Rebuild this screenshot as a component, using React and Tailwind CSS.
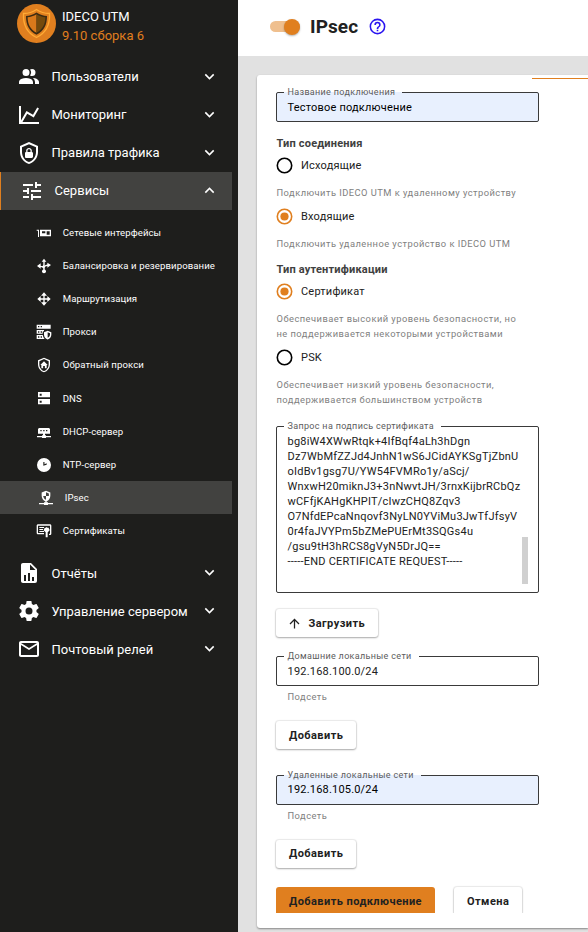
import React from 'react';
import { MdTune } from 'react-icons/md';

const P = {
  users:
    'M16 17V19H2V17S2 13 9 13 16 17 16 17M12.5 7.5A3.5 3.5 0 1 0 9 11A3.5 3.5 0 0 0 12.5 7.5M15.94 13A5.32 5.32 0 0 1 18 17V19H22V17S22 13.37 15.94 13M15 4A3.39 3.39 0 0 0 13.07 4.59A5 5 0 0 1 13.07 10.41A3.39 3.39 0 0 0 15 11A3.5 3.5 0 0 0 15 4Z',
  chart: 'M16,11.78L20.24,4.45L21.97,5.45L16.74,14.5L10.23,10.75L5.46,19H22V21H2V3H4V17.54L9.5,8L16,11.78Z',
  lock: 'M21,11C21,16.55 17.16,21.74 12,23C6.84,21.74 3,16.55 3,11V5L12,1L21,5V11M12,21C15.75,20 19,15.54 19,11.22V6.3L12,3.18L5,6.3V11.22C5,15.54 8.25,20 12,21M14.8,11V9.5C14.8,8.1 13.4,7 12,7C10.6,7 9.2,8.1 9.2,9.5V11C8.6,11 8,11.6 8,12.2V15.7C8,16.4 8.6,17 9.2,17H14.7C15.4,17 16,16.4 16,15.8V12.3C16,11.6 15.4,11 14.8,11M13.5,11H10.5V9.5C10.5,8.7 11.2,8.2 12,8.2C12.8,8.2 13.5,8.7 13.5,9.5V11Z',
  report:
    'M13,9H18.5L13,3.5V9M6,2H14L20,8V20A2,2 0 0,1 18,22H6C4.89,22 4,21.1 4,20V4C4,2.89 4.89,2 6,2M7,20H9V14H7V20M11,20H13V12H11V20M15,20H17V16H15V20Z',
  cog: 'M12,15.5A3.5,3.5 0 0,1 8.5,12A3.5,3.5 0 0,1 12,8.5A3.5,3.5 0 0,1 15.5,12A3.5,3.5 0 0,1 12,15.5M19.43,12.97C19.47,12.65 19.5,12.33 19.5,12C19.5,11.67 19.47,11.34 19.43,11L21.54,9.37C21.73,9.22 21.78,8.95 21.66,8.73L19.66,5.27C19.54,5.05 19.27,4.96 19.05,5.05L16.56,6.05C16.04,5.66 15.5,5.32 14.87,5.07L14.5,2.42C14.46,2.18 14.25,2 14,2H10C9.75,2 9.54,2.18 9.5,2.42L9.13,5.07C8.5,5.32 7.96,5.66 7.44,6.05L4.95,5.05C4.73,4.96 4.46,5.05 4.34,5.27L2.34,8.73C2.21,8.95 2.27,9.22 2.46,9.37L4.57,11C4.53,11.34 4.5,11.67 4.5,12C4.5,12.33 4.53,12.65 4.57,12.97L2.46,14.63C2.27,14.78 2.21,15.05 2.34,15.27L4.34,18.73C4.46,18.95 4.73,19.03 4.95,18.95L7.44,17.94C7.96,18.34 8.5,18.68 9.13,18.93L9.5,21.58C9.54,21.82 9.75,22 10,22H14C14.25,22 14.46,21.82 14.5,21.58L14.87,18.93C15.5,18.67 16.04,18.34 16.56,17.94L19.05,18.95C19.27,19.03 19.54,18.95 19.66,18.73L21.66,15.27C21.78,15.05 21.73,14.78 21.54,14.63L19.43,12.97Z',
  mail: 'M22 6C22 4.9 21.1 4 20 4H4C2.9 4 2 4.9 2 6V18C2 19.1 2.9 20 4 20H20C21.1 20 22 19.1 22 18V6M20 6L12 11L4 6H20M20 18H4V8L12 13L20 8V18Z',
  nic: 'M1 7H4.5V18H3V8.500H1ZM6 7H22.500V17H6ZM9 9.500V12.500H14V9.500ZM16 9.500V14.500H20.500V9.500Z',
  balance:
    'M12 1L8.500 5.500H11V9C11 12 10 12.500 7 11.800V8L1.500 12L7 16V13.500C9.500 14 11 15 11 16.500V17.200A3 3 0 1 0 13 17.200V16C13 13 14.500 12 17 12V14.500L22.500 10.500L17 7V9.800C15 10 13.800 10.600 13 11.500V5.500H15.500Z',
  route: 'M13,11H17V7.500L22,12L17,16.500V13H13V17H16.500L12,22L7.500,17H11V13H7V16.500L2,12L7,7.500V11H11V7H7.500L12,2L16.500,7H13V11Z',
  proxy:
    'M1 1H22V7H1ZM3 3V5H5V3ZM7 3V5H9V3ZM1 9H12V10.500L10 11.500V14.500H1ZM3 11V13H5V11ZM7 11V13H9V11ZM1 16.500H10.200C10.500 18.800 11.500 21 13 22.500H1ZM3 18.500V20.500H5V18.500ZM7 18.500V20.500H9V18.500ZM17.500 10L23 12.300V16C23 19.300 20.700 22.300 17.500 23.200C14.300 22.300 12 19.300 12 16V12.300ZM17.500 12.500V20.700C19.500 19.900 21 18 21 15.900V13.800Z',
  home: 'M21,11C21,16.55 17.16,21.74 12,23C6.84,21.74 3,16.55 3,11V5L12,1L21,5V11M12,21C15.75,20 19,15.54 19,11.22V6.3L12,3.18L5,6.3V11.22C5,15.54 8.25,20 12,21M12 6.500L17.500 12H16V17H13.300V13.500H10.700V17H8V12H6.500Z',
  dns: 'M3 3H21V11H3ZM5.500 5.500V8.500H8.500V5.500ZM3 13.500H21V21.500H3ZM5.500 16V19H8.500V16Z',
  dhcp: 'M4.500 7.500H19.500L21 9V16H13.500V18.500H15V19.500H22.500V21.500H15V22.500H9V21.500H1.500V19.500H9V18.500H10.500V16H3V9ZM6.500 10.500V12.500H8.500V10.500ZM10.800 10.500V12.500H12.800V10.500ZM15 10.500V12.500H17V10.500Z',
  clock: 'M12 1.500A10.500 10.500 0 1 0 12 22.500A10.500 10.500 0 1 0 12 1.500M11 7.500H12.700V10.700L16 9.500V11.500L11 13Z',
  ipsec:
    'M12 1L18.500 3.700V8.500C18.500 12.500 16 15.500 13 16.700V18.500H15V19.500H22.500V21.500H15V22.500H9V21.500H1.500V19.500H9V18.500H11V16.700C8 15.500 5.500 12.500 5.500 8.500V3.700ZM12 3.500V9H7.800C8.200 11.800 9.900 14 12 14.800V9H16.300V5.300Z',
  cert: 'M3 2H21C22 2 23 3 23 4V16C23 17 22 18 21 18H19.500V16H21V4H3V15H12V17H3C2 17 1 16 1 15V4C1 3 2 2 3 2ZM5 6H12V7.500H5ZM5 9H10.500V10.500H5ZM5 12H12V13.500H5ZM16 6L17.200 7.200H19L19.500 9L20.700 10.500L19.500 12L17.500 14V21.500H14.500V14L12.500 12L11.300 10.500L12.500 9L13 7.200H14.800Z',
};

function Icon({ d, className }) {
  return (
    <svg viewBox="0 0 24 24" className={`shrink-0 ${className}`} fill="currentColor" fillRule="evenodd">
      <path d={d} />
    </svg>
  );
}

function Chevron({ up }) {
  return (
    <svg viewBox="0 0 24 24" className="mr-[13px] mb-px size-[19px] shrink-0" fill="currentColor">
      <path
        d={
          up
            ? 'M7.41 15.41L12 10.83L16.59 15.41L18 14L12 8L6 14L7.41 15.41Z'
            : 'M7.41 8.58L12 13.17L16.59 8.58L18 10L12 16L6 10L7.41 8.58Z'
        }
      />
    </svg>
  );
}

function Group({ d, children }) {
  return (
    <div className="flex h-[38px] w-[232px] items-center pl-[17px]">
      <Icon d={d} className="size-6" />
      <span className="ml-[10.500px] flex-1 text-[13px] tracking-[0.01px] whitespace-nowrap">{children}</span>
      <Chevron />
    </div>
  );
}

const SERVICES = [
  ['nic', 'Сетевые интерфейсы'],
  ['balance', 'Балансировка и резервирование'],
  ['route', 'Маршрутизация'],
  ['proxy', 'Прокси'],
  ['home', 'Обратный прокси'],
  ['dns', 'DNS'],
  ['dhcp', 'DHCP-сервер'],
  ['clock', 'NTP-сервер'],
  ['ipsec', 'IPsec'],
  ['cert', 'Сертификаты'],
];

function Sidebar() {
  return (
    <aside className="flex w-[238px] shrink-0 flex-col bg-[#1e1e1c] text-white">
      <div className="flex h-[58px] items-start pt-[4px] pl-[17px]">
        <svg viewBox="0 0 39 39" className="size-[39px] shrink-0">
          <circle cx="19.500" cy="19.500" r="19.500" fill="#e07f1f" />
          <path d="M19.500 5.500C23 8 28 9.500 32.500 9.500C33 20 29 29 19.500 33.500C10 29 6 20 6.500 9.500C11 9.500 16 8 19.500 5.500Z" fill="#e07f1f" stroke="#ffab35" strokeWidth="1.300" />
          <path d="M19.500 8.500C23 10.800 26.500 12 30 12C30 21 27 27 19.500 30.700C12 27 9 21 9 12C12.500 12 16 10.800 19.500 8.500Z" fill="#3c2b12" />
          <path d="M19.500 10.300V28.800C13.500 25.500 10.700 20.500 10.600 13.300C13.500 13.100 16.700 12.100 19.500 10.300Z" fill="#d9791b" />
          <path d="M19.500 10.300V28.800C25.500 25.500 28.300 20.500 28.400 13.300C25.500 13.100 22.300 12.100 19.500 10.300Z" fill="#744a0c" />
        </svg>
        <div className="ml-[6px] flex flex-col pt-[3px] text-[13px] leading-[19px] tracking-[0.01px]">
          <span>IDECO UTM</span>
          <span className="text-[#e07f1f]">9.10 сборка 6</span>
        </div>
      </div>
      <Group d={P.users}>Пользователи</Group>
      <Group d={P.chart}>Мониторинг</Group>
      <Group d={P.lock}>Правила трафика</Group>
      <div className="flex h-[38px] w-[232px] items-center border-l border-[#e07f1f] bg-[#424240] pl-[19px]">
        <MdTune className="size-6 shrink-0" />
        <span className="ml-[10.500px] flex-1 text-[13px] tracking-[0.01px]">Сервисы</span>
        <Chevron up />
      </div>
      <div className="flex flex-col pt-[6px] pb-[7px]">
        {SERVICES.map(([k, label]) => (
          <div
            key={k}
            className={`flex h-[33.15px] w-[232px] items-center text-[9.600px] tracking-[0.09px] whitespace-nowrap ${
              k === 'ipsec' ? 'bg-[#424240] pl-[38px]' : 'pl-[36px]'
            }`}
          >
            <Icon d={P[k]} className="size-4" />
            <span className="ml-[10.700px] pt-px">{label}</span>
          </div>
        ))}
      </div>
      <Group d={P.report}>Отчёты</Group>
      <Group d={P.cog}>Управление сервером</Group>
      <Group d={P.mail}>Почтовый релей</Group>
    </aside>
  );
}

function Radio({ checked, children }) {
  return (
    <div className="flex h-4 items-center">
      <svg viewBox="0 0 17 17" className={`mb-px size-[17px] shrink-0 ${checked ? 'text-[#e07f1f]' : 'text-black'}`}>
        <circle cx="8.500" cy="8.500" r="7.200" fill="none" stroke="currentColor" strokeWidth="1.600" />
        {checked && <circle cx="8.500" cy="8.500" r="4.100" fill="currentColor" />}
      </svg>
      <span className="ml-[8px] text-[11px] leading-4 tracking-[0.2px]">{children}</span>
    </div>
  );
}

function Hint({ children }) {
  return (
    <p className="pl-[0.500px] text-[9.330px] leading-[15px] tracking-[0.460px] whitespace-nowrap text-[#808080]">{children}</p>
  );
}

function Field({ label, className, children }) {
  return (
    <fieldset className={`w-[263px] rounded-[2px] border border-[#3a3a3a] text-[11px] tracking-[0.2px] ${className}`}>
      <legend className="ml-[7px] h-[10px] pr-[7px] pl-[3.500px] text-[9px] leading-[10px] tracking-[0.33px] whitespace-nowrap text-[#5c5c5c]">
        {label}
      </legend>
      {children}
    </fieldset>
  );
}

function Button({ className = '', children }) {
  return (
    <button
      className={`flex h-[28px] w-fit items-center rounded-[3px] bg-white pt-[2px] text-[11px] font-bold tracking-[0.440px] whitespace-nowrap shadow-[0_0_1px_1px_rgba(0,0,0,0.08),0_1px_2px_rgba(0,0,0,0.28)] ${className}`}
    >
      {children}
    </button>
  );
}

const REQUEST = [
  'bg8iW4XWwRtqk+4IfBqf4aLh3hDgn',
  'Dz7WbMfZZJd4JnhN1wS6JCidAYKSgTjZbnU',
  'oIdBv1gsg7U/YW54FVMRo1y/aScj/',
  'WnxwH20miknJ3+3nNwvtJH/3rnxKijbrRCbQz',
  'wCFfjKAHgKHPIT/cIwzCHQ8Zqv3',
  'O7NfdEPcaNnqovf3NyLN0YViMu3JwTfJfsyV',
  '0r4faJVYPm5bZMePUErMt3SQGs4u',
  '/gsu9tH3hRCS8gVyN5DrJQ==',
  '-----END CERTIFICATE REQUEST-----',
];

export default function App() {
  return (
    <div className="flex h-[932px] w-[588px] overflow-hidden bg-[#e1e1e1] font-['Roboto','Noto_Sans',sans-serif] text-[#212121]">
      <Sidebar />
      <main className="flex min-w-0 flex-1 flex-col">
        <header className="flex h-[56px] shrink-0 items-center bg-white pb-[3px] pl-[32px]">
          <div className="flex h-[11px] w-[30px] items-center justify-end rounded-full bg-[#efbf8e]">
            <span className="size-4 rounded-full bg-[#e07f1f] shadow-[0_1px_2px_rgba(0,0,0,0.3)]" />
          </div>
          <h1 className="ml-[10px] text-[19px] leading-6 font-bold tracking-[0.1px]">IPsec</h1>
          <svg viewBox="0 0 24 24" className="ml-[9.500px] size-[19px]" fill="#2a14f0">
            <path d="M11,18H13V16H11V18M12,2A10,10 0 0,0 2,12A10,10 0 0,0 12,22A10,10 0 0,0 22,12A10,10 0 0,0 12,2M12,20C7.59,20 4,16.41 4,12C4,7.59 7.59,4 12,4C16.41,4 20,7.59 20,12C20,16.41 16.41,20 12,20M12,6A4,4 0 0,0 8,10H10A2,2 0 0,1 12,8A2,2 0 0,1 14,10C14,12 11,11.75 11,15H13C13,12.75 16,12.5 16,10A4,4 0 0,0 12,6Z" />
          </svg>
        </header>
        <section className="mt-[19px] ml-[19px] flex h-[853px] flex-col rounded-l-[3px] bg-white pt-[3px] pl-[19px] shadow-[0_1px_2px_rgba(0,0,0,0.4)]">
          <div className="h-px w-[56px] shrink-0 self-end bg-[#e07f1f]" />
          <Field label="Название подключения" className="mt-[8px] h-[35px] bg-[#e8f0fe]">
            <div className="pt-[3px] pl-[10.500px] leading-[15px] text-black">Тестовое подключение</div>
          </Field>
          <h2 className="mt-[14px] pl-[0.500px] text-[11px] leading-[15px] font-bold tracking-[0.2px] text-[#404040]">Тип соединения</h2>
          <div className="mt-[7px]">
            <Radio>Исходящие</Radio>
          </div>
          <div className="mt-[11px]">
            <Hint>Подключить IDECO UTM к удаленному устройству</Hint>
          </div>
          <div className="mt-[9px]">
            <Radio checked>Входящие</Radio>
          </div>
          <div className="mt-[11px]">
            <Hint>Подключить удаленное устройство к IDECO UTM</Hint>
          </div>
          <h2 className="mt-[11px] pl-[0.500px] text-[11px] leading-[15px] font-bold tracking-[0.2px] text-[#404040]">Тип аутентификации</h2>
          <div className="mt-[7px]">
            <Radio checked>Сертификат</Radio>
          </div>
          <div className="mt-[11px]">
            <Hint>
              Обеспечивает высокий уровень безопасности, но
              <br />
              не поддерживается некоторыми устройствами
            </Hint>
          </div>
          <div className="mt-[9px]">
            <Radio>PSK</Radio>
          </div>
          <div className="mt-[11px]">
            <Hint>
              Обеспечивает низкий уровень безопасности,
              <br />
              поддерживается большинством устройств
            </Hint>
          </div>
          <Field label="Запрос на подпись сертификата" className="mt-[14px] h-[172px]">
            <div className="flex justify-between pt-[3px] pr-[10px] pl-[10.500px]">
              <div className="w-[234px] shrink-0 text-[11px] leading-[15px] tracking-[0.220px] whitespace-nowrap">
                {REQUEST.map((line) => (
                  <div key={line}>{line}</div>
                ))}
              </div>
              <div className="mt-[103px] h-[47px] w-[6px] bg-[#d0d0d0]" />
            </div>
          </Field>
          <Button className="mt-[16px] pr-[13px] pl-[11px]">
            <svg viewBox="0 0 24 24" className="mr-[6.500px] mb-px size-[15px]" fill="currentColor">
              <path d="M13,20H11V8L5.500,13.500L4.080,12.080L12,4.160L19.920,12.080L18.500,13.500L13,8V20Z" />
            </svg>
            Загрузить
          </Button>
          <Field label="Домашние локальные сети" className="mt-[14px] h-[35px]">
            <div className="pt-[3px] pl-[10.500px] leading-[15px]">192.168.100.0/24</div>
          </Field>
          <div className="mt-[3px] pl-[11px]">
            <Hint>Подсеть</Hint>
          </div>
          <Button className="mt-[17px] px-[13px]">Добавить</Button>
          <Field label="Удаленные локальные сети" className="mt-[21px] h-[35px] bg-[#e8f0fe]">
            <div className="pt-[2px] pl-[10.500px] leading-[15px] text-black">192.168.105.0/24</div>
          </Field>
          <div className="mt-[3px] pl-[11px]">
            <Hint>Подсеть</Hint>
          </div>
          <Button className="mt-[17px] px-[13px] pt-px">Добавить</Button>
          <div className="mt-[15px] -ml-[3px] flex h-[30px] shrink-0 gap-[19px] overflow-hidden pt-[4px] pl-[3px]">
            <button className="h-[28px] rounded-[3px] bg-[#e07f1f] px-[13px] pt-[2px] text-[11px] font-bold tracking-[0.440px] whitespace-nowrap">
              Добавить подключение
            </button>
            <Button className="px-[13px]">Отмена</Button>
          </div>
        </section>
      </main>
    </div>
  );
}
